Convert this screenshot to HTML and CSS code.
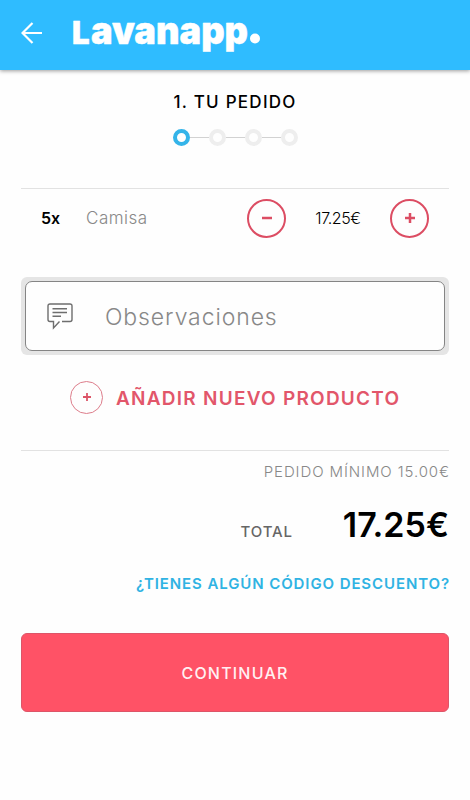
FILE: index.html
```html
<!DOCTYPE html>

<html lang="es">
    <head>
        <meta charset="utf-8">
        <title>Lavanapp</title>

        <link rel="stylesheet" href="styles.css">
    </head>

    <body>
        <header class="header">
            <svg class="back" width="22" height="22" viewBox="0 0 22 22">
                <path d="M21 11H1.5M11.5 1L1.5 11L11.5 21"/>
            </svg>

            <svg class="logo" width="190" height="44" viewBox="0 0 190 44">
                <text class="logo-cap" x="-1" y="29.500">L</text>
                <text class="logo-text" x="18" y="29.500" textLength="157" lengthAdjust="spacingAndGlyphs">avanapp</text>
                <circle cx="182" cy="24.500" r="5"/>
            </svg>
        </header>

        <main class="content">
            <h1 class="title">1. TU PEDIDO</h1>

            <div class="steps">
                <span class="step active"></span>
                <span class="line"></span>
                <span class="step"></span>
                <span class="line"></span>
                <span class="step"></span>
                <span class="line"></span>
                <span class="step"></span>
            </div>

            <div class="item">
                <span class="amount">5x</span>
                <span class="name">Camisa</span>
                <button class="round">
                    <svg width="12" height="12" viewBox="0 0 12 12"><path d="M1 6H11"/></svg>
                </button>
                <span class="price">17.25€</span>
                <button class="round">
                    <svg width="12" height="12" viewBox="0 0 12 12"><path d="M1 6H11M6 1V11"/></svg>
                </button>
            </div>

            <div class="notes">
                <div class="notes-box">
                    <svg class="notes-icon" width="26" height="27" viewBox="0 0 26 27">
                        <path d="M15 18.500H23Q25 18.500 25 16.500V3Q25 1 23 1H3Q1 1 1 3V16.500Q1 18.500 3 18.500H6.500V25L12.500 18.500M5.500 5.800H20M5.500 9.500H20M5.500 13.300H14"/>
                    </svg>
                    <span class="notes-text">Observaciones</span>
                </div>
            </div>

            <div class="add">
                <span class="add-icon">
                    <svg width="10" height="10" viewBox="0 0 10 10"><path d="M1 5H9M5 1V9"/></svg>
                </span>
                <span class="add-text">AÑADIR NUEVO PRODUCTO</span>
            </div>

            <div class="summary">
                <div class="minimum">PEDIDO MÍNIMO 15.00€</div>

                <div class="total">
                    <span class="total-label">TOTAL</span>
                    <span class="total-price">17.25€</span>
                </div>

                <a class="discount">¿TIENES ALGÚN CÓDIGO DESCUENTO?</a>
            </div>

            <button class="continue">CONTINUAR</button>
        </main>
    </body>
</html>
```
FILE: styles.css
```css
*
{
    box-sizing: border-box;
}

body
{
    margin: 0;
    background: #fefefe;
    color: black;
    font-family: Inter, "Liberation Sans", sans-serif;
}

button
{
    padding: 0;
    font-family: inherit;
    cursor: pointer;
}

.header
{
    display: flex;
    align-items: flex-start;
    height: 70px;
    padding: 14px 0 0 21px;
    background: #2fbcff;
    box-shadow: 0 1px 4px rgba(0, 0, 0, 0.4);
}

.back
{
    margin-top: 8px;
    fill: none;
    stroke: white;
    stroke-width: 2.2;
}

.logo
{
    margin-left: 30px;
    fill: white;
    overflow: visible;
}

.logo-cap,
.logo-text
{
    font-weight: 900;
    stroke: white;
    stroke-width: 0.5;
    stroke-linejoin: round;
}

.logo-cap
{
    font-size: 31px;
}

.logo-text
{
    font-size: 38px;
}

.content
{
    padding: 0 21px;
}

.title
{
    height: 22px;
    margin: 21px 0 0;
    font-size: 17px;
    font-weight: 500;
    line-height: 22px;
    letter-spacing: 1.25px;
    text-align: center;
}

.steps
{
    display: flex;
    align-items: center;
    justify-content: center;
    height: 17px;
    margin-top: 16px;
}

.step
{
    width: 17px;
    height: 17px;
    border: 4px solid #eeeeee;
    border-radius: 50%;
}

.step.active
{
    border-color: #34b4e9;
}

.line
{
    width: 19px;
    height: 1px;
    background: #d2d2d2;
}

.item
{
    display: flex;
    align-items: center;
    height: 59px;
    margin-top: 42px;
    padding-left: 20px;
    border-top: 1px solid #e2e2e2;
}

.amount
{
    width: 45px;
    font-size: 16px;
    font-weight: 600;
}

.name
{
    width: 161px;
    color: #888888;
    font-size: 17px;
    font-weight: 300;
    letter-spacing: 0.5px;
}

.round
{
    display: flex;
    align-items: center;
    justify-content: center;
    width: 39px;
    height: 39px;
    border: 2px solid #dc4d63;
    border-radius: 50%;
    background: none;
}

.round svg
{
    fill: none;
    stroke: #dc4d63;
    stroke-width: 2.5;
}

.price
{
    width: 104px;
    font-size: 16px;
    font-weight: 300;
    letter-spacing: -0.4px;
    text-align: center;
}

.notes
{
    height: 78px;
    margin-top: 30px;
    padding: 4px;
    border-radius: 6px;
    background: #e5e5e5;
}

.notes-box
{
    display: flex;
    align-items: center;
    height: 70px;
    padding-left: 21px;
    border: 1px solid #858585;
    border-radius: 7px;
    background: #fefefe;
}

.notes-icon
{
    fill: none;
    stroke: #6e6e6e;
    stroke-width: 1.4;
}

.notes-text
{
    margin-left: 32px;
    color: #888888;
    font-size: 23px;
    font-weight: 300;
    letter-spacing: 0.9px;
    line-height: 28px;
    padding-top: 2px;
}

.add
{
    display: flex;
    align-items: center;
    height: 34px;
    margin-top: 25px;
    padding-left: 49px;
}

.add-icon
{
    display: flex;
    align-items: center;
    justify-content: center;
    width: 33px;
    height: 33px;
    border: 1px solid #dd7d8b;
    border-radius: 50%;
}

.add-icon svg
{
    stroke: #dc5568;
    stroke-width: 1.8;
}

.add-text
{
    margin-left: 13px;
    padding-top: 2px;
    color: #e2566a;
    font-size: 19px;
    font-weight: 600;
    letter-spacing: 1.25px;
    white-space: nowrap;
}

.summary
{
    margin-top: 36px;
    border-top: 1px solid #e2e2e2;
    text-align: right;
}

.minimum
{
    margin: 10px -1px 0 0;
    color: #888888;
    font-size: 15px;
    font-weight: 300;
    line-height: 22px;
    letter-spacing: 0.9px;
}

.total
{
    display: flex;
    align-items: baseline;
    justify-content: flex-end;
    height: 44px;
    margin-top: 20px;
    line-height: 44px;
}

.total-label
{
    color: #666666;
    font-size: 15px;
    font-weight: 500;
    letter-spacing: 0.9px;
}

.total-price
{
    width: 156px;
    font-size: 34px;
    font-weight: 600;
}

.discount
{
    display: block;
    margin: 26px -1px 0 0;
    color: #30b3e3;
    font-size: 15px;
    font-weight: 600;
    line-height: 22px;
    letter-spacing: 0.9px;
    white-space: nowrap;
}

.continue
{
    display: block;
    width: 428px;
    height: 79px;
    margin-top: 38px;
    border: 1px solid #dd5568;
    border-radius: 6px;
    background: #ff5266;
    color: #fff0f2;
    font-size: 16px;
    font-weight: 500;
    letter-spacing: 1.2px;
}
```
